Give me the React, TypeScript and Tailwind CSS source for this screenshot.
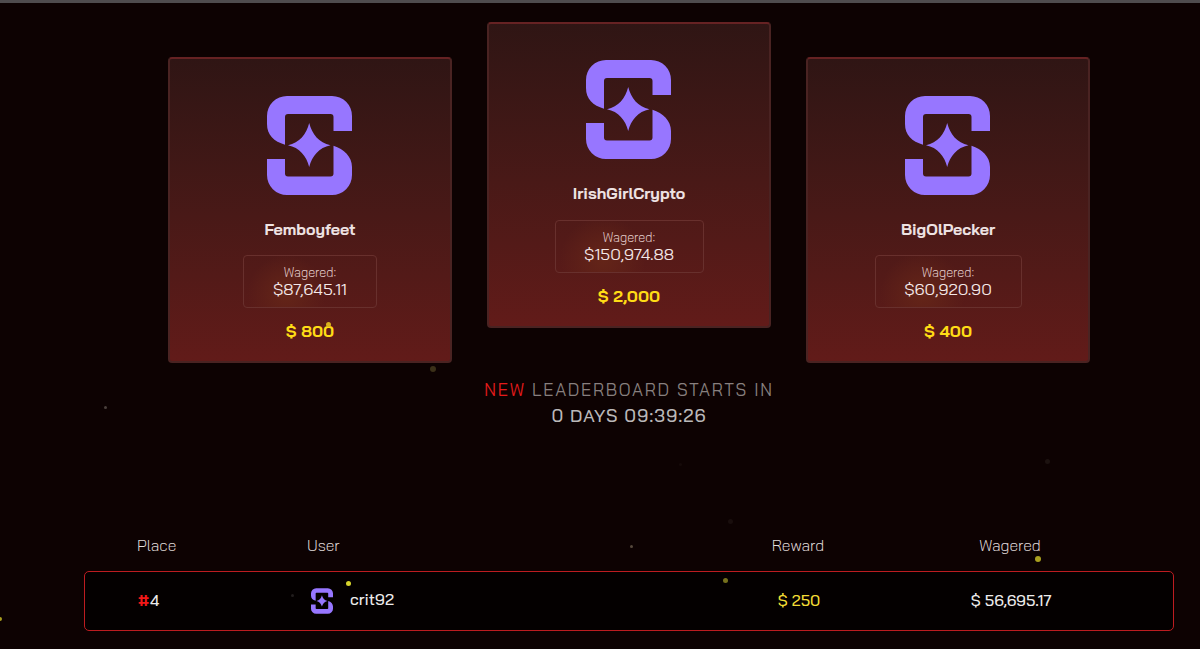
import React from "react";
import clsx from "clsx";

interface Winner {
  name: string;
  wagered: string;
  reward: string;
  first?: boolean;
  boxClass: string;
}

const winners: Winner[] = [
  {
    name: "Femboyfeet",
    wagered: "$87,645.11",
    reward: "$ 800",
    boxClass: "w-[134px]",
  },
  {
    name: "IrishGirlCrypto",
    wagered: "$150,974.88",
    reward: "$ 2,000",
    first: true,
    boxClass: "w-[149px]",
  },
  {
    name: "BigOlPecker",
    wagered: "$60,920.90",
    reward: "$ 400",
    boxClass: "w-[147px]",
  },
];

// floating embers behind and over the content
const embers = [
  "left-[326px] top-[322px] size-[5px] bg-[#d8b01c]",
  "left-[430px] top-[366px] size-[6px] bg-[#3b3018]",
  "left-[104px] top-[406px] size-[3px] bg-[#4a403c]",
  "left-[1045px] top-[459px] size-[5px] bg-[#1c1210]",
  "left-[679px] top-[463px] size-[3px] bg-[#150a09]",
  "left-[728px] top-[519px] size-[5px] bg-[#190e0d]",
  "left-[630px] top-[545px] size-[3px] bg-[#55483c]",
  "left-[1035px] top-[556px] size-[6px] bg-[#a9a01f]",
  "left-[723px] top-[578px] size-[5px] bg-[#75701c]",
  "left-[346px] top-[581px] size-[5px] bg-[#d6d32c]",
  "left-[291px] top-[594px] size-[3px] bg-[#221d1d]",
  "left-[-2px] top-[617px] size-[4px] bg-[#aaa01f]",
];

const Logo: React.FC<{ className?: string }> = ({ className }) => (
  <svg viewBox="0 0 85 99" className={className} fill="#9776ff" aria-hidden="true">
    <path d="M20 0H65A20 20 0 0 1 85 20V35H66.500V21Q66.500 18 63.500 18H21Q18 18 18 21V48.700C7 45.500 0 39 0 28V20A20 20 0 0 1 20 0Z" />
    <path d="M0 63H18V77.500Q18 80.500 21 80.500H63.500Q66.500 80.500 66.500 77.500V49.800C77 53 85 61 85 71V79A20 20 0 0 1 65 99H20A20 20 0 0 1 0 79Z" />
    <path d="M42.200 27C45 38 52 47 63.500 49.200C52 51.500 45 60 42.200 71C39.500 60 32.500 51.500 21 49.200C32.500 47 39.500 38 42.200 27Z" />
  </svg>
);

const WinnerCard: React.FC<{ winner: Winner }> = ({ winner }) => (
  <div
    className={clsx(
      "flex h-[306px] w-[284px] flex-col items-center rounded-[4px] border-2 border-[#4a2322] border-t-[#662223] bg-linear-to-b from-[#2f1514] to-[#621b19] bg-origin-border",
      winner.first ? "pt-[36px]" : "mt-[35px] pt-[37px]",
    )}
  >
    <Logo className="mr-[2px] h-[99px] w-[85px]" />
    <div className="mt-[22px] text-[16px] leading-6 font-bold whitespace-nowrap text-[#eee2e2]">
      {winner.name}
    </div>
    <div
      className={clsx(
        "flex h-[53px] flex-col items-center rounded-[4px] border border-[#68302d] bg-[radial-gradient(circle_at_32%_75%,#642518_0%,transparent_40%)] pt-[7px]",
        winner.first ? "mt-[15px]" : "mt-[14px]",
        winner.boxClass,
      )}
    >
      <div className="text-[12.7px] leading-[18px] font-light text-[#e6d0cf]">Wagered:</div>
      <div className="text-[16.5px] leading-4 whitespace-nowrap text-[#f4e8e8]">
        {winner.wagered}
      </div>
    </div>
    <div className="mt-[11px] text-[16.5px] leading-6 font-bold text-[#ffdc16]">
      {winner.reward}
    </div>
  </div>
);

export default function App() {
  return (
    <div className="relative flex h-[649px] w-full flex-col overflow-hidden border-t-[3px] border-[#4f4c4e] bg-[#0d0202] font-['Bai_Jamjuree',Inter,sans-serif]">
      <div className="ml-[168px] flex h-[341px] items-start gap-[35px] pt-[19px]">
        {winners.map((winner) => (
          <WinnerCard key={winner.name} winner={winner} />
        ))}
      </div>

      <div className="ml-[58px] flex flex-col items-center pt-[33px] uppercase">
        <div className="text-[17px] leading-[26px] tracking-[1.75px] text-[#88807f]">
          <span className="text-[#e41b1b]">New</span> Leaderboard starts in
        </div>
        <div className="text-[18px] leading-[26px] font-medium tracking-[1px] text-[#bab8b9]">
          0 days 09:39:26
        </div>
      </div>

      {/* leaderboard table */}
      <div className="mt-[102px] ml-[84px] w-[1090px]">
        <div className="grid h-[40px] grid-cols-[170px_385px_212px_212px] items-center pb-[10px] pl-[53px] text-[15.7px] font-light text-[#e2dddd]">
          <div>Place</div>
          <div>User</div>
          <div className="text-center">Reward</div>
          <div className="text-center">Wagered</div>
        </div>
        <div className="grid h-[60px] grid-cols-[170px_385px_212px_212px] items-center rounded-[5px] border-[1.5px] border-[#bd1c20] bg-[#040000] pl-[53px] text-[15.6px] font-medium text-[#eceaea]">
          <div>
            <span className="mr-px font-bold text-[#f21818]">#</span>4
          </div>
          <div className="flex items-center gap-[17px] pl-[3px]">
            <Logo className="h-[26px] w-[22px]" />
            <span className="pb-[4px] text-[16px]">crit92</span>
          </div>
          <div className="text-center text-[#f2dc35]">$ 250</div>
          <div className="text-center">$ 56,695.17</div>
        </div>
      </div>

      {embers.map((ember) => (
        <span key={ember} className={clsx("absolute -mt-[3px] rounded-full blur-[0.6px]", ember)} />
      ))}
    </div>
  );
}
